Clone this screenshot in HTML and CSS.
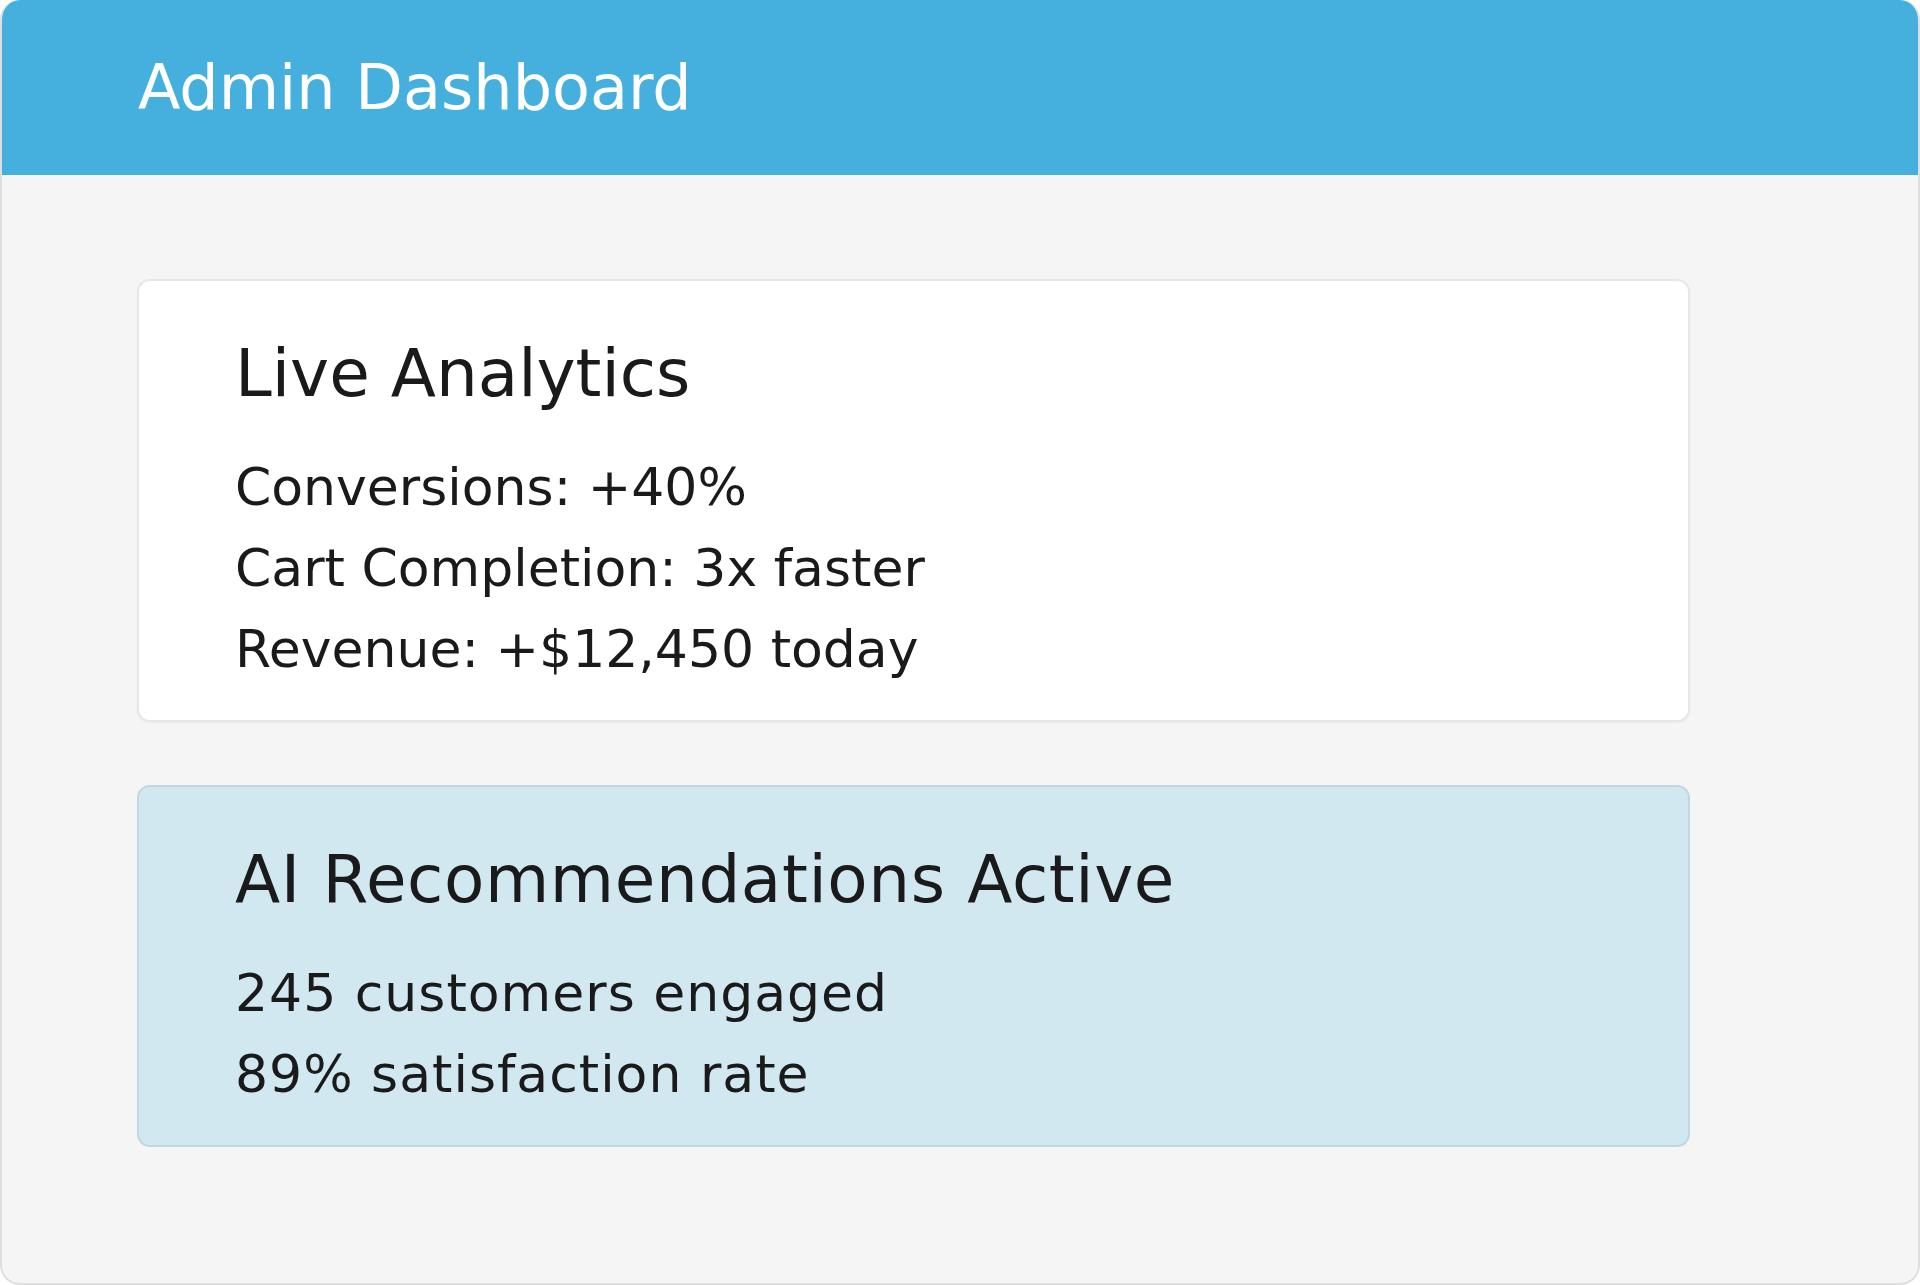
FILE: index.html
```html
<!DOCTYPE html>
<html lang="en">
<head>
<meta charset="utf-8">
<title>Admin Dashboard</title>
<link rel="stylesheet" href="styles.css">
</head>
<body>
<div class="frame">
  <header class="topbar">
    <h1 class="topbar-title">Admin Dashboard</h1>
  </header>
  <main class="content">
    <section class="card card-plain">
      <h2 class="card-title">Live Analytics</h2>
      <div class="card-body">
        <p class="line">Conversions: +40%</p>
        <p class="line">Cart Completion: 3x faster</p>
        <p class="line">Revenue: +$12,450 today</p>
      </div>
    </section>
    <section class="card card-ai">
      <h2 class="card-title">AI Recommendations Active</h2>
      <div class="card-body">
        <p class="line">245 customers engaged</p>
        <p class="line">89% satisfaction rate</p>
      </div>
    </section>
  </main>
</div>
</body>
</html>
```

FILE: styles.css
```css
* {
  box-sizing: border-box;
}

html, body {
  margin: 0;
  padding: 0;
  background: #ffffff;
}

body {
  font-family: "DejaVu Sans", "Noto Sans", sans-serif;
  color: #1b1b1b;
}

.frame {
  width: 1920px;
  height: 1285px;
  display: flex;
  flex-direction: column;
  background: #f5f5f5;
  border: 2px solid #dedede;
  border-top: none;
  border-radius: 20px;
  overflow: hidden;
  padding-bottom: 2px;
}

.topbar {
  background: #45b0dd;
  height: 175px;
  padding: 50px 0 50px 136px;
  margin: 0 -2px;
  flex: none;
}

.topbar-title {
  margin: 0 0 0 2px;
  font-size: 62px;
  line-height: 75px;
  font-weight: 400;
  color: #ffffff;
}

.content {
  display: flex;
  flex-direction: column;
  gap: 63px;
  padding: 104px 0 0 135px;
}

.card {
  width: 1553px;
  border: 2px solid #e7e7e7;
  border-radius: 13px;
  padding: 53px 40px 30px 96px;
}

.card-plain {
  background: #ffffff;
  box-shadow: 0 1px 2px rgba(0, 0, 0, 0.04);
}

.card-ai {
  background: #d1e8f0;
  border-color: #bfd7e1;
}

.card-title {
  margin: 0;
  font-size: 66px;
  line-height: 80px;
  font-weight: 400;
  color: #1a1a1a;
}

.card-ai .card-title {
  letter-spacing: 0.6px;
}

.card-body {
  margin-top: 33px;
}

.line {
  margin: 0;
  font-size: 52px;
  line-height: 81px;
  color: #1a1a1a;
}

.card-ai .line {
  letter-spacing: 1px;
}
```
